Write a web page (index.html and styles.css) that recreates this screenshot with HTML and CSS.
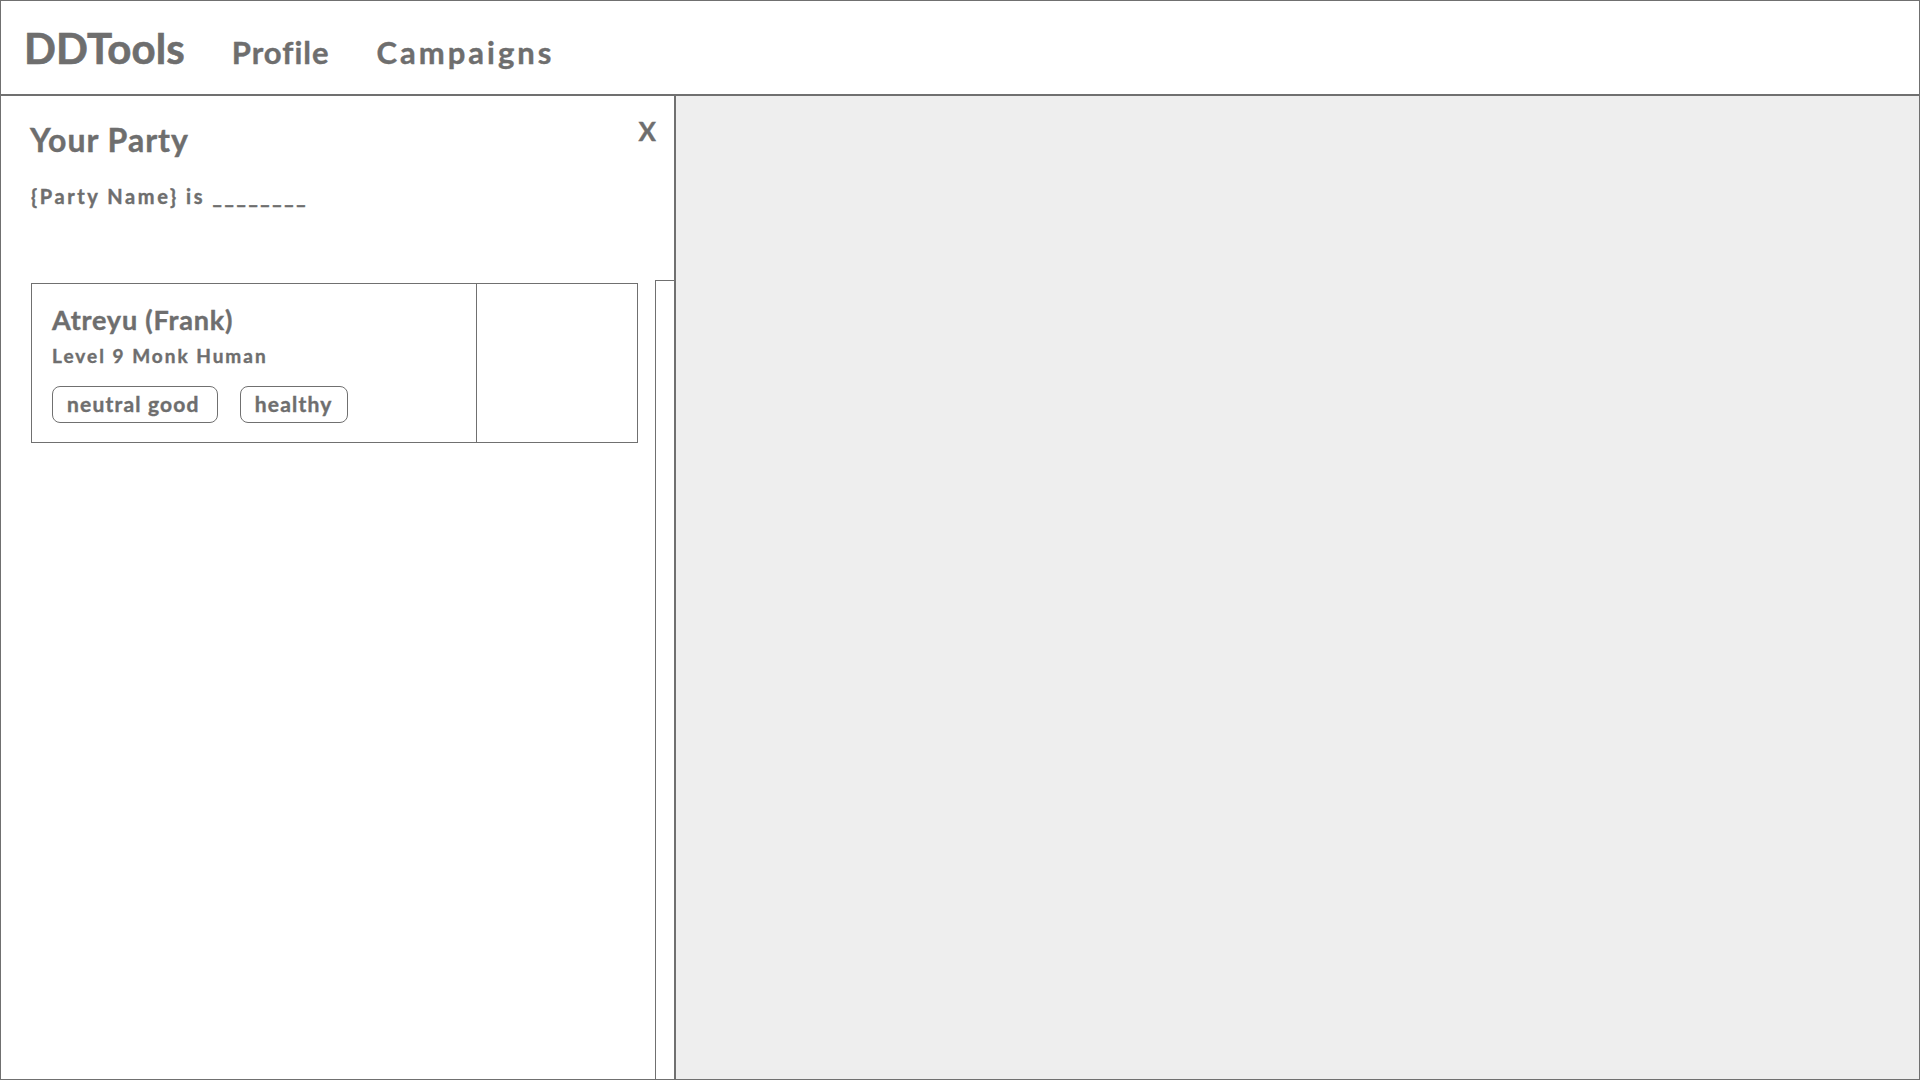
FILE: index.html
```html
<!DOCTYPE html>
<html lang="en">
<head>
<meta charset="utf-8">
<title>DDTools</title>
<link rel="stylesheet" href="styles.css">
</head>
<body>
<div class="frame">
  <header class="topbar">
    <span class="brand">DDTools</span>
    <nav class="nav">
      <a class="nav-link nav-profile" href="#">Profile</a>
      <a class="nav-link nav-campaigns" href="#">Campaigns</a>
    </nav>
  </header>
  <main class="main">
    <aside class="panel">
      <div class="panel-head">
        <h2 class="panel-title">Your Party</h2>
        <button class="close">X</button>
      </div>
      <p class="party-line">{Party Name} is ________</p>
      <div class="panel-body">
        <div class="list">
          <div class="card">
            <div class="card-info">
              <div class="char-name">Atreyu (Frank)</div>
              <div class="char-sub">Level 9 Monk Human</div>
              <div class="tags">
                <span class="tag">neutral good</span>
                <span class="tag">healthy</span>
              </div>
            </div>
            <div class="card-side"></div>
          </div>
        </div>
        <div class="track"></div>
      </div>
    </aside>
    <section class="canvas"></section>
  </main>
</div>
</body>
</html>
```
FILE: styles.css
```css
* { box-sizing: border-box; }
html, body { margin: 0; padding: 0; }
body {
  font-family: "Lato", "Noto Sans", sans-serif;
  font-weight: 700;
  color: #6e6e6e;
  background: #ffffff;
  -webkit-text-stroke: 0.4px #6e6e6e;
}
.frame {
  width: 1920px;
  height: 1080px;
  border: 1px solid #707070;
  display: flex;
  flex-direction: column;
}
.topbar {
  height: 95px;
  flex: none;
  border-bottom: 2px solid #707070;
  display: flex;
  align-items: baseline;
  padding: 26px 0 0 23px;
}
.brand {
  font-size: 42px;
  line-height: 1;
  letter-spacing: 0.1px;
  -webkit-text-stroke: 0.6px #6e6e6e;
}
.nav {
  display: flex;
  align-items: baseline;
  gap: 47px;
  margin-left: 47px;
}
.nav-link {
  font-size: 31px;
  line-height: 1;
  color: #6e6e6e;
  text-decoration: none;
}
.nav-profile { letter-spacing: 1px; }
.nav-campaigns { letter-spacing: 3px; }
.main {
  flex: 1;
  display: flex;
  min-height: 0;
}
.panel {
  width: 675px;
  flex: none;
  border-right: 2px solid #707070;
  display: flex;
  flex-direction: column;
  padding-top: 22px;
}
.panel-head {
  display: flex;
  justify-content: space-between;
  align-items: flex-start;
  padding: 0 18px 0 29px;
}
.panel-title {
  margin: 6px 0 0;
  font-size: 32px;
  line-height: 1;
  font-weight: 700;
  letter-spacing: 1px;
}
.close {
  border: none;
  background: none;
  padding: 0;
  font-family: inherit;
  font-weight: 700;
  font-size: 26px;
  line-height: 1;
  color: #6e6e6e;
  -webkit-text-stroke: 0.4px #6e6e6e;
}
.party-line {
  margin: 30px 0 0;
  padding-left: 30px;
  font-size: 20px;
  line-height: 1;
  letter-spacing: 2.6px;
}
.panel-body {
  flex: 1;
  display: flex;
  margin-top: 74px;
}
.list {
  flex: 1;
  padding: 3px 17px 0 30px;
}
.card {
  height: 160px;
  border: 1px solid #707070;
  display: grid;
  grid-template-columns: 1fr 161px;
}
.card-info {
  padding: 22px 0 0 20px;
}
.card-side {
  border-left: 1px solid #707070;
}
.char-name {
  font-size: 27px;
  line-height: 1;
  letter-spacing: 0.8px;
}
.char-sub {
  margin-top: 13px;
  font-size: 19px;
  line-height: 1;
  letter-spacing: 2px;
}
.tags {
  margin-top: 21px;
  display: flex;
  gap: 22px;
}
.tag {
  border: 1px solid #707070;
  border-radius: 8px;
  padding: 6px 17px 8px 14px;
  font-size: 21px;
  line-height: 1;
  letter-spacing: 1.2px;
}
.tag + .tag {
  padding-right: 14px;
}
.track {
  width: 19px;
  flex: none;
  border-top: 1px solid #707070;
  border-left: 1px solid #707070;
}
.canvas {
  flex: 1;
  background: #eeeeee;
}
```
